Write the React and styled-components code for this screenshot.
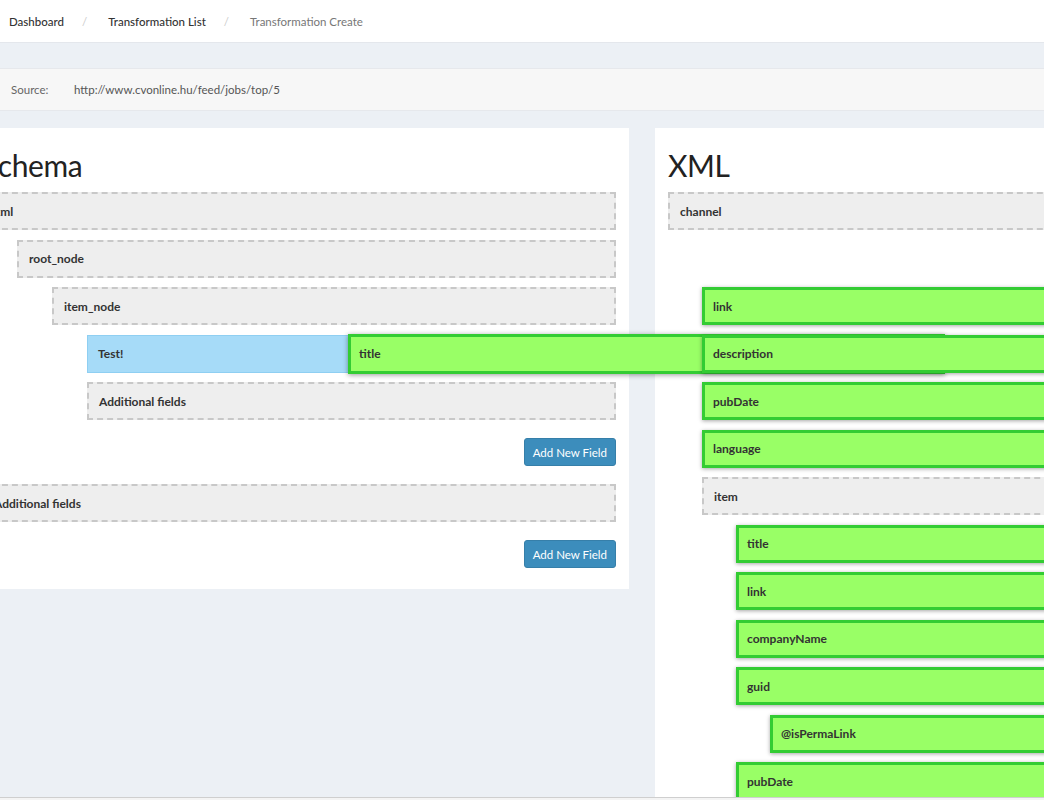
import React from "react";
import styled, { createGlobalStyle } from "styled-components";

const GlobalStyle = createGlobalStyle`
  html, body {
    margin: 0;
    padding: 0;
    background: #ecf0f5;
    font-family: Lato, "Open Sans", sans-serif;
    color: #333;
    overflow: hidden;
  }
  * { box-sizing: border-box; }
`;

const schema = [
  {
    name: "xml",
    children: [
      {
        name: "root_node",
        children: [
          {
            name: "item_node",
            children: [{ name: "Test!", mapped: true }],
            extra: true,
          },
        ],
        button: true,
      },
    ],
  },
];

const xml = [
  {
    name: "channel",
    dashed: true,
    children: [
      { placeholder: true },
      { name: "link" },
      { name: "description" },
      { name: "pubDate" },
      { name: "language" },
      {
        name: "item",
        dashed: true,
        children: [
          { name: "title" },
          { name: "link" },
          { name: "companyName" },
          { name: "guid", children: [{ name: "@isPermaLink" }] },
          { name: "pubDate" },
        ],
      },
    ],
  },
];

export default function App() {
  return (
    <>
      <GlobalStyle />
      <Header>
        <Crumb>Dashboard</Crumb>
        <Sep>/</Sep>
        <Crumb>Transformation List</Crumb>
        <Sep>/</Sep>
        <Crumb $active>Transformation Create</Crumb>
      </Header>
      <SourceBar>
        <SourceLabel>Source:</SourceLabel>
        <SourceUrl>http://www.cvonline.hu/feed/jobs/top/5</SourceUrl>
      </SourceBar>
      <Panels>
        <Panel>
          <Title>Schema</Title>
          {schema.map((n, i) => (
            <SchemaNode key={i} node={n} />
          ))}
          <DashedBox>Additional fields</DashedBox>
          <ButtonRow $last>
            <AddButton>Add New Field</AddButton>
          </ButtonRow>
        </Panel>
        <Panel $tall>
          <Title>XML</Title>
          {xml.map((n, i) => (
            <XmlNode key={i} node={n} />
          ))}
        </Panel>
      </Panels>
      <BottomEdge />
    </>
  );
}

function SchemaNode({ node }) {
  if (node.mapped) {
    return (
      <MappedBox>
        {node.name}
        <Dragged>title</Dragged>
      </MappedBox>
    );
  }
  return (
    <>
      <DashedBox>{node.name}</DashedBox>
      <Indent>
        {node.children.map((c, i) => (
          <SchemaNode key={i} node={c} />
        ))}
        {node.extra && <DashedBox>Additional fields</DashedBox>}
      </Indent>
      {node.button && (
        <ButtonRow>
          <AddButton>Add New Field</AddButton>
        </ButtonRow>
      )}
    </>
  );
}

function XmlNode({ node }) {
  if (node.placeholder) return <Placeholder />;
  const Box = node.dashed ? DashedBox : GreenBox;
  return (
    <>
      <Box>{node.name}</Box>
      {node.children && (
        <Indent $step={34}>
          {node.children.map((c, i) => (
            <XmlNode key={i} node={c} />
          ))}
        </Indent>
      )}
    </>
  );
}

/* ---------------- styled ---------------- */
const Header = styled.div`
  height: 43px;
  background: #fff;
  border-bottom: 1px solid #e4e7ec;
  display: flex;
  align-items: center;
  padding-left: 9px;
  font-size: 11.5px;
`;

const Crumb = styled.span`
  color: ${(p) => (p.$active ? "#777" : "#333")};
  font-weight: ${(p) => (p.$active ? 400 : 500)};
`;

const Sep = styled.span`
  color: #ccc;
  padding: 0 21px 0 18px;
`;

const SourceBar = styled.div`
  margin-top: 25px;
  height: 43px;
  background: #f7f7f7;
  border-top: 1px solid #e6e8ec;
  border-bottom: 1px solid #e6e8ec;
  display: flex;
  align-items: center;
  padding-left: 11px;
  font-size: 11.5px;
`;

const SourceLabel = styled.span`
  width: 63px;
  color: #666;
`;

const SourceUrl = styled.span`
  color: #555;
`;

const Panels = styled.div`
  display: flex;
  align-items: flex-start;
  gap: 26px;
  margin: 17px 0 0 -31px;
`;

const Panel = styled.div`
  flex: 0 0 660px;
  background: #fff;
  padding: 0 13px 13px;
  min-height: ${(p) => (p.$tall ? "700px" : "0")};
`;

const Title = styled.h1`
  margin: 0 0 9px;
  padding-top: 19px;
  font-size: 30px;
  line-height: 36px;
  font-weight: 400;
  letter-spacing: -0.4px;
  color: #222;
`;

const Indent = styled.div`
  margin-left: ${(p) => p.$step || 35}px;
`;

const Row = styled.div`
  height: 38px;
  margin-bottom: 9.5px;
  display: flex;
  align-items: center;
  font-size: 12px;
  font-weight: 700;
  color: #333;
  white-space: nowrap;
`;

const DashedBox = styled(Row)`
  background: #eee;
  border: 2px dashed #c8c8c8;
  padding-left: 10px;
`;

const Placeholder = styled(Row)``;

const GreenBox = styled(Row)`
  position: relative;
  z-index: 2;
  background: #99ff66;
  border: 3px solid #33cc33;
  padding-left: 8px;
  box-shadow: 0 1px 4px rgba(0, 0, 0, 0.35);
`;

const MappedBox = styled(Row)`
  position: relative;
  background: #a6dbf8;
  border: 1px solid #8fcff2;
  padding-left: 10px;
`;

const Dragged = styled.div`
  position: absolute;
  z-index: 1;
  left: 260px;
  top: -2px;
  width: 597px;
  height: 40px;
  display: flex;
  align-items: center;
  padding-left: 8px;
  background: #99ff66;
  border: 3px solid #33cc33;
  box-shadow: 0 1px 5px rgba(0, 0, 0, 0.4);
`;

const ButtonRow = styled.div`
  display: flex;
  justify-content: flex-end;
  margin: 18px 0 ${(p) => (p.$last ? "8px" : "18px")};
`;

const AddButton = styled.button`
  height: 28px;
  padding: 0 8px;
  background: #3c8dbc;
  border: 1px solid #367fa9;
  border-radius: 3px;
  color: #fff;
  font-family: inherit;
  font-size: 11.5px;
`;

const BottomEdge = styled.div`
  position: fixed;
  left: 0;
  right: 0;
  bottom: 0;
  height: 3px;
  background: #f4f4f4;
  border-top: 1px solid #cfcfcf;
  z-index: 5;
`;
